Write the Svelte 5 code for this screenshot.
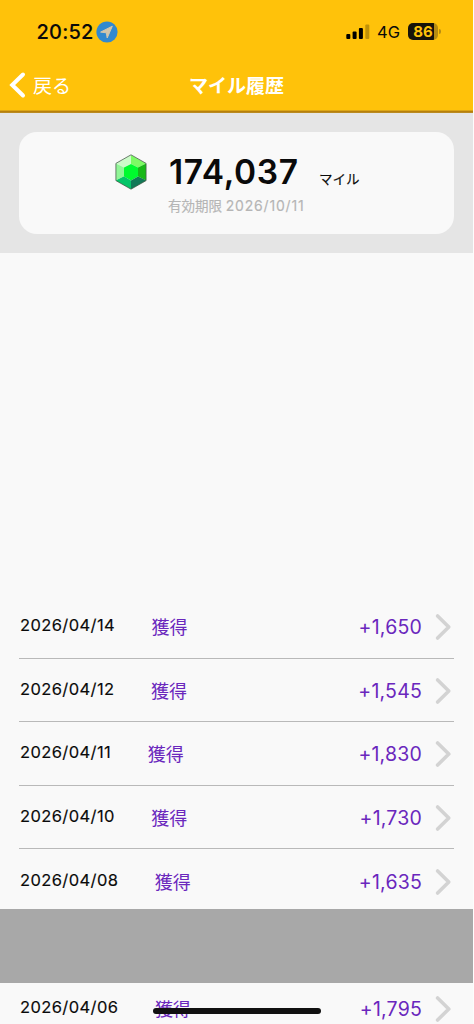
<script>
  const rows = [
    { date: '2026/04/14', miles: '+1,650' },
    { date: '2026/04/12', miles: '+1,545' },
    { date: '2026/04/11', miles: '+1,830' },
    { date: '2026/04/10', miles: '+1,730' },
    { date: '2026/04/08', miles: '+1,635', beforeBand: true },
    { date: '2026/04/06', miles: '+1,795', afterBand: true },
  ];
</script>

<div class="screen">
  <header>
    <div class="status">
      <span class="time">20:52</span>
      <svg class="location" width="22" height="22" viewBox="0 0 22 22">
        <circle cx="11" cy="11" r="10.6" fill="#3289cf" />
        <path d="M4.6 11.1 16.3 5.2 11.2 17 10.3 11.8z" fill="#d3c6ab" stroke="#d3c6ab" stroke-linejoin="round" />
      </svg>
      <svg class="signal" width="24" height="16" viewBox="0 0 24 16">
        <rect x="0.3" y="10" width="4" height="5" rx="1" />
        <rect x="6.6" y="7.5" width="4" height="7.5" rx="1" />
        <rect x="12.9" y="4" width="4" height="11" rx="1" />
        <rect x="19.3" y="0.5" width="4" height="14.5" rx="1" opacity="0.25" />
      </svg>
      <span class="network">4G</span>
      <div class="battery"><span>86</span></div>
      <i class="battery-tip"></i>
    </div>
    <nav>
      <a class="back" href="#back">
        <svg width="18" height="28" viewBox="0 0 18 28">
          <path d="M15 3.5 4.2 14 15 24.5" fill="none" stroke="#fff" stroke-width="4" stroke-linecap="round" />
        </svg>
        <span>戻る</span>
      </a>
      <h1>マイル履歴</h1>
    </nav>
  </header>

  <section class="summary">
    <div class="card">
      <svg class="gem" width="32" height="36" viewBox="0 0 32 36">
        <path d="M16 1 1 9.5 9 13.5 16 10z" fill="#ccfbc8" />
        <path d="M16 1 31 9.5 23 13.5 16 10z" fill="#7dfb64" />
        <path d="M31 9.5v17L23 22.5v-9z" fill="#18b818" />
        <path d="M31 26.5 16 35v-6.5l7-5.5z" fill="#127957" />
        <path d="M16 35 1 26.5l8-4 7 6z" fill="#05c568" />
        <path d="M1 26.5v-17l8 4v9z" fill="#91f697" />
        <path d="M16 10l7 3.5v9l-7 4-7-4v-9z" fill="#00fb2e" />
        <path d="M16 26.5l7-4 8 4L16 35z" fill="#127957" />
        <path d="M16 26.5l-7-4-8 4L16 35z" fill="#05c568" />
        <path d="M16 .8 31.1 9.4v17.2L16 35.2.9 26.6V9.4z" fill="none" stroke="#46604a" stroke-width="0.8" />
      </svg>
      <div class="balance">
        <div class="total"><strong>174,037</strong><span>マイル</span></div>
        <p class="expiry">有効期限 <span>2026/10/11</span></p>
      </div>
    </div>
  </section>

  <ul class="history">
    {#each rows as row}
      {#if row.afterBand}
        <li class="band"></li>
      {/if}
      <li class="row" class:last={row.beforeBand} class:clipped={row.afterBand}>
        <span class="date">{row.date}</span>
        <span class="kind">獲得</span>
        <span class="miles">{row.miles}</span>
        <svg width="17" height="28" viewBox="0 0 17 28">
          <path d="M2.6 3 13.8 14 2.6 25" fill="none" stroke="#d3d3d3" stroke-width="3.6" stroke-linecap="round" stroke-linejoin="round" />
        </svg>
      </li>
    {/each}
  </ul>
  <div class="home-indicator"></div>
</div>

<style>
  :global(body) {
    background: #fdfdfd;
  }

  .screen {
    position: relative;
    width: 473px;
    height: 1024px;
    overflow: hidden;
    background: #f9f9f9;
    color: #0a0a0a;
    font-family: Inter, 'Noto Sans CJK JP', sans-serif;
  }

  header {
    box-sizing: border-box;
    height: 113px;
    background: #ffc20a;
    border-bottom: 1px solid #b98a20;
    box-shadow: inset 0 -1px #b67f0c, inset 0 -2px #dba514;
  }

  .status {
    display: flex;
    align-items: center;
    height: 63px;
    padding-left: 36.5px;
  }

  .time {
    width: 59.5px;
    font-size: 20px;
    font-weight: 500;
    letter-spacing: 0.2px;
    -webkit-text-stroke: 0.1px;
  }

  .signal {
    margin-left: 228px;
  }

  .network {
    width: 31px;
    margin-left: 7px;
    font-size: 16.5px;
  }

  .battery {
    width: 30px;
    height: 17px;
    border-radius: 5px;
    background: linear-gradient(90deg, #17130a 26px, #b78c12 26px);
    color: #ffc20a;
    font-size: 15px;
    font-weight: 700;
    line-height: 17px;
    text-align: center;
  }

  .battery-tip {
    width: 2px;
    height: 5px;
    margin-left: 1px;
    border-radius: 0 2px 2px 0;
    background: #b78c12;
  }

  nav {
    display: grid;
    grid-template-columns: 1fr auto 1fr;
    align-items: center;
    height: 44px;
    color: #fff;
  }

  .back {
    display: flex;
    align-items: center;
    gap: 7px;
    padding-left: 8px;
    color: inherit;
    font-size: 19px;
    text-decoration: none;
  }

  .back span,
  h1 {
    margin: -1px 0 0;
  }

  h1 {
    font-size: 19px;
    font-weight: 700;
  }

  .summary {
    box-sizing: border-box;
    height: 140px;
    padding: 19px 19px 19px 19.4px;
    background: #e5e5e5;
  }

  .card {
    display: flex;
    align-items: flex-start;
    height: 102px;
    border-radius: 18px;
    background: #f9f9f9;
  }

  .gem {
    margin: 22px 0 0 95.6px;
  }

  .balance {
    margin: 19px 0 0 21px;
  }

  .total {
    display: flex;
    align-items: baseline;
    height: 42px;
  }

  .total strong {
    width: 150px;
    padding-left: 1px;
    font-size: 33.5px;
    font-weight: 600;
    letter-spacing: 0.65px;
    line-height: 42px;
  }

  .total span {
    font-size: 13.5px;
    font-weight: 400;
    -webkit-text-stroke: 0.15px;
  }

  .expiry {
    margin: 3px 0 0;
    color: #b5b5b5;
    font-size: 13.5px;
    line-height: 20px;
    -webkit-text-stroke: 0.15px;
  }

  .expiry span {
    font-size: 14px;
    letter-spacing: 0.8px;
  }

  .history {
    margin: 342px 0 0;
    padding: 0;
    list-style: none;
  }

  .row {
    display: flex;
    align-items: center;
    box-sizing: border-box;
    height: 63.5px;
    margin: 0 19px;
    border-bottom: 1px solid #b9b9b9;
  }

  .date {
    margin: -2px 36.5px 0 1px;
    font-size: 16.5px;
    font-weight: 400;
    letter-spacing: 0.4px;
    -webkit-text-stroke: 0.15px;
  }

  .kind {
    color: #6a27bd;
    font-size: 18px;
  }

  .miles {
    margin: 2px 0 0 auto;
    color: #6a27bd;
    font-size: 19.5px;
    letter-spacing: 0.2px;
  }

  .row svg {
    margin: 2px 2px 0 13px;
  }

  .last {
    height: 60px;
    padding-top: 3px;
    border: 0;
  }

  .band {
    height: 73.5px;
    background: #a8a8a8;
  }

  .clipped {
    height: 50px;
    border: 0;
  }

  .home-indicator {
    position: absolute;
    bottom: 10px;
    left: 153px;
    width: 168px;
    height: 6px;
    border-radius: 3px;
    background: #111;
  }
</style>
